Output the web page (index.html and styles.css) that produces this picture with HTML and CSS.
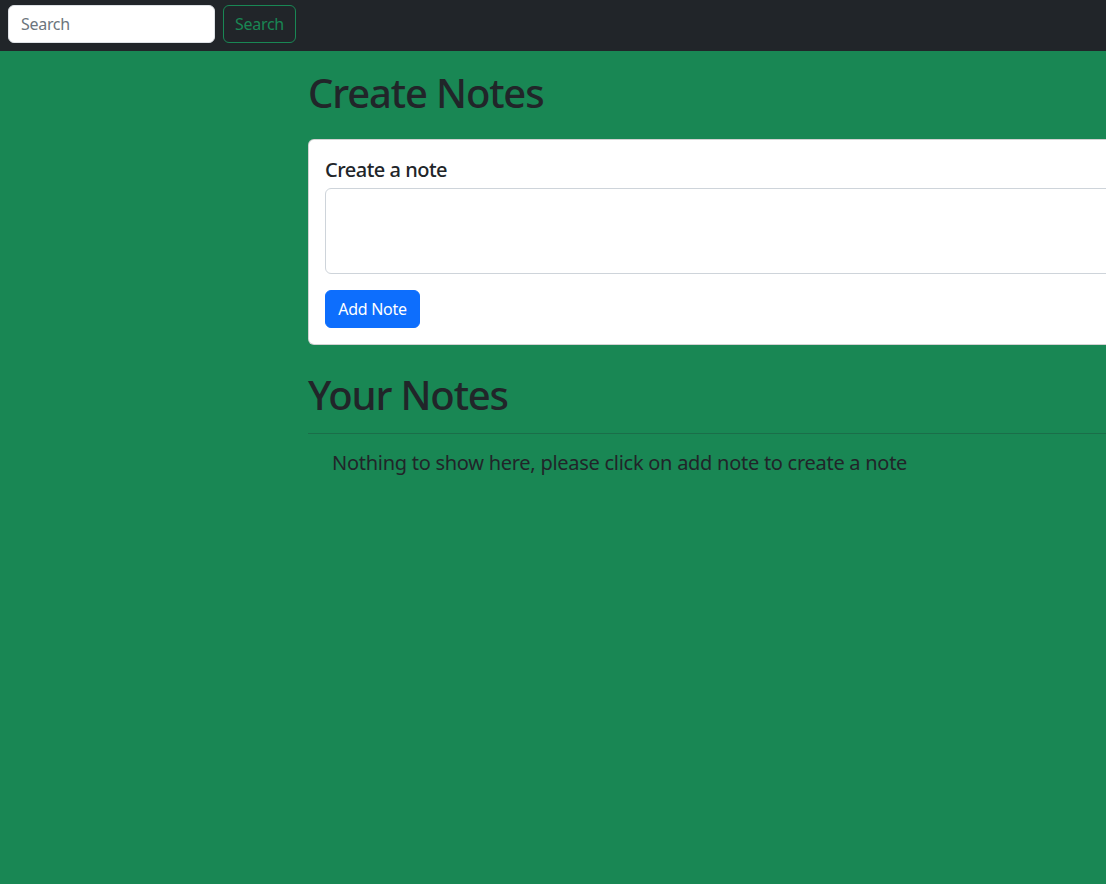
FILE: index.html
```html
<!DOCTYPE html>
<html lang="en">
<head>
<meta charset="utf-8">
<title>Notes</title>
<link rel="stylesheet" href="styles.css">
</head>
<body>
<nav class="navbar">
  <form class="search-form">
    <input class="search-input" type="search" placeholder="Search">
    <button class="search-btn" type="button">Search</button>
  </form>
</nav>
<main class="main">
  <h1 class="title">Create Notes</h1>
  <div class="card">
    <h5 class="card-title">Create a note</h5>
    <textarea class="note-input" rows="3"></textarea>
    <button class="add-btn" type="button">Add Note</button>
  </div>
  <h1 class="title title-notes">Your Notes</h1>
  <hr class="divider">
  <div class="notes">
    <p class="empty">Nothing to show here, please click on add note to create a note</p>
  </div>
</main>
</body>
</html>
```
FILE: styles.css
```css
html, body {
  margin: 0;
  padding: 0;
  overflow: hidden;
}
body {
  background: #198754;
  color: #212529;
  font-family: "Noto Sans", "Open Sans", sans-serif;
  font-size: 16px;
  line-height: 1.5;
  width: 1106px;
  min-height: 884px;
}
.navbar {
  background: #212529;
  height: 51px;
  box-sizing: border-box;
  padding: 5px 8px 8px;
  display: flex;
  align-items: flex-start;
}
.search-form {
  display: flex;
  gap: 8px;
}
.search-input {
  width: 207px;
  height: 38px;
  box-sizing: border-box;
  border: 1px solid #dee2e6;
  border-radius: 6px;
  padding: 6px 12px;
  font-family: inherit;
  font-size: 16px;
  letter-spacing: -0.3px;
  color: #212529;
  background: #fff;
}
.search-input::placeholder {
  color: #6c757d;
}
.search-btn {
  height: 38px;
  width: 73px;
  box-sizing: border-box;
  border: 1px solid #198754;
  border-radius: 6px;
  background: transparent;
  color: #198754;
  font-family: inherit;
  font-size: 16px;
  letter-spacing: -0.3px;
  padding: 0;
}
.main {
  margin: 17px 0 0 308px;
  width: 1000px;
}
.title {
  font-size: 40px;
  font-weight: 500;
  line-height: 1.2;
  letter-spacing: -1.15px;
  padding-top: 1px;
  margin: 0 0 8px;
}
.card {
  margin-top: 22px;
  background: #fff;
  border: 1px solid rgba(0,0,0,.175);
  border-radius: 6px;
  padding: 16px;
  display: flex;
  flex-direction: column;
  align-items: flex-start;
}
.card-title {
  font-size: 20px;
  font-weight: 500;
  line-height: 1.2;
  letter-spacing: -0.5px;
  padding-top: 2px;
  margin: 0 0 6px;
}
.note-input {
  width: 100%;
  box-sizing: border-box;
  height: 86px;
  border: 1px solid #ced4da;
  border-radius: 6px;
  padding: 6px 12px;
  resize: none;
  font-family: inherit;
  font-size: 16px;
}
.add-btn {
  margin-top: 16px;
  height: 38px;
  width: 95px;
  padding: 0;
  border: 1px solid #0d6efd;
  border-radius: 6px;
  background: #0d6efd;
  color: #fff;
  font-family: inherit;
  font-size: 16px;
  letter-spacing: -0.3px;
}
.title-notes {
  margin-top: 24px;
  padding-top: 2px;
}
.divider {
  margin: 14px 0 0;
  border: 0;
  border-top: 1px solid #212529;
  opacity: .25;
}
.notes {
  padding: 0 24px;
  margin-top: 14px;
}
.empty {
  margin: 0;
  font-size: 20px;
  line-height: 30px;
  letter-spacing: -0.27px;
}
```
